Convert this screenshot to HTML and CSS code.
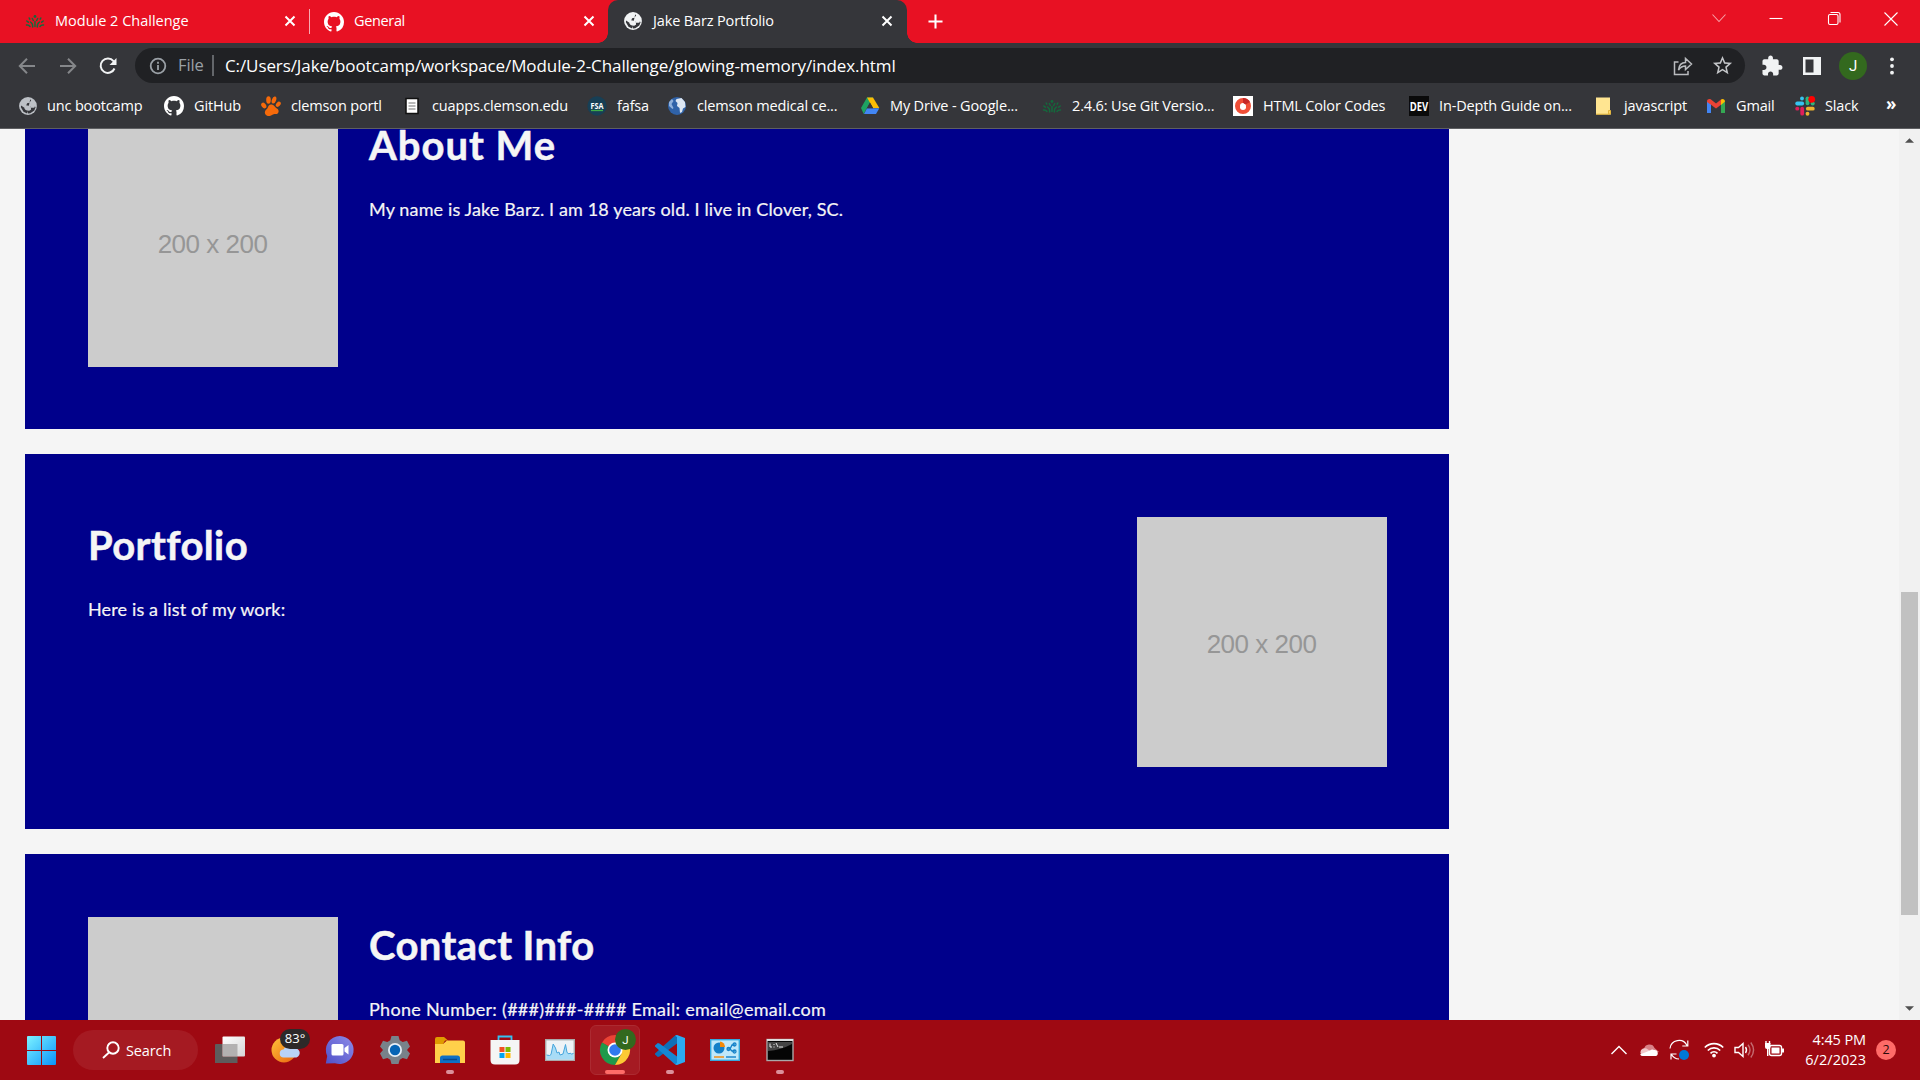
FILE: index.html
```html
<!DOCTYPE html>
<html lang="en">
<head>
<meta charset="utf-8">
<title>Jake Barz Portfolio</title>
<link rel="stylesheet" href="styles.css">
</head>
<body>
<svg class="defs" aria-hidden="true">
  <symbol id="globe" viewBox="0 0 20 20"><circle cx="10" cy="10" r="9.900" fill="currentColor"/><path d="M12.500 2.500l1 1.500-2 2.500-2.500.5-1 2.500 4 .5 1.500 2h3.500l.5-1.500 1 .5-1.500 4-4.500 3-2.500.3-.5-3-2.500-1L6 12 2.300 9.500l-.2 2L5 16.500l4 1.700" fill="#35363a" /><path d="M8 9.800h4l1.300 2v2.500l-2.500 1.200-2-2.500H6z" fill="currentColor"/></symbol>
  <symbol id="github" viewBox="0 0 16 16"><path fill="#fff" d="M8 0C3.580 0 0 3.580 0 8c0 3.540 2.290 6.530 5.470 7.590.4.070.55-.17.55-.38 0-.19-.01-.82-.01-1.490-2.010.37-2.530-.49-2.690-.94-.09-.23-.48-.94-.82-1.130-.28-.15-.68-.52-.01-.53.63-.01 1.080.58 1.230.82.72 1.210 1.870.87 2.330.66.070-.52.28-.87.51-1.070-1.780-.2-3.640-.89-3.640-3.950 0-.87.31-1.590.82-2.150-.08-.2-.36-1.020.08-2.120 0 0 .67-.21 2.200.82.64-.18 1.320-.27 2-.27s1.360.09 2 .27c1.530-1.040 2.200-.82 2.200-.82.44 1.100.16 1.920.08 2.120.51.56.82 1.270.82 2.150 0 3.070-1.870 3.750-3.650 3.950.29.25.54.73.54 1.480 0 1.070-.01 1.930-.01 2.200 0 .21.15.46.55.38A8.010 8.010 0 0 0 16 8c0-4.420-3.580-8-8-8z"/></symbol>
  <symbol id="leaf" viewBox="0 0 20 20"><g fill="none" stroke="#14693c" stroke-width="1.500" stroke-linecap="round"><path d="M10 15.500V10.500M7.700 16c.2-2.500-.7-4-2.200-5M12.300 16c-.2-2.500.7-4 2.200-5M5 15.500c-.8-1.200-2-1.700-3.500-1.500M15 15.500c.8-1.200 2-1.700 3.500-1.500M8.300 9.500L7.300 7.500M11.700 9.500l1-2M3.300 11.200L1.800 10M16.700 11.200l1.500-1.200M4.800 8.200l-.6-1.200M15.200 8.200l.6-1.200"/></g><circle cx="10" cy="5.500" r="1.400" fill="#14693c"/></symbol>
  <symbol id="close" viewBox="0 0 12 12"><path d="M1.500 1.500l9 9M10.500 1.500l-9 9" stroke="#fff" stroke-width="2" fill="none"/></symbol>
</svg>

<header class="browser">
  <div class="tabs">
    <div class="tab tab-first"><svg class="ico"><use href="#leaf"/></svg><span>Module 2 Challenge</span><svg class="x"><use href="#close"/></svg></div>
    <div class="tab tab-second"><svg class="ico"><use href="#github"/></svg><span>General</span><svg class="x"><use href="#close"/></svg></div>
    <div class="tab tab-active"><svg class="ico globe-tab"><use href="#globe"/></svg><span>Jake Barz Portfolio</span><svg class="x"><use href="#close"/></svg></div>
    <svg class="plus" viewBox="0 0 16 16"><path d="M8 .5v15M.5 8h15" stroke="#fff" stroke-width="2.200"/></svg>
    <div class="win">
      <svg viewBox="0 0 20 20"><path d="M3.500 6.500L10 13.500l6.500-7"/></svg>
      <svg viewBox="0 0 20 20"><path d="M3.500 10.500h13"/></svg>
      <svg viewBox="0 0 20 20"><rect x="4.500" y="6.500" width="9.500" height="10" rx="1.500"/><path d="M6.500 4.500h7.500q2 0 2 2v8"/></svg>
      <svg viewBox="0 0 20 20"><path d="M3.500 4.500l13 13M16.500 4.500l-13 13"/></svg>
    </div>
  </div>

  <div class="toolbar">
    <div class="nav">
      <svg viewBox="0 0 20 20"><path d="M18 10H3M10 2.800L2.800 10l7.200 7.200" stroke="#85878a"/></svg>
      <svg viewBox="0 0 20 20"><path d="M2 10h15M10 2.800l7.200 7.200-7.200 7.200" stroke="#85878a"/></svg>
      <svg viewBox="0 0 20 20"><path d="M16.500 12.500A7.200 7.200 0 1 1 15.500 5.200L17.500 7.500" stroke="#f1f3f4"/><path d="M18.500 2v7h-7z" fill="#f1f3f4"/></svg>
    </div>
    <div class="omnibox">
      <svg class="info" viewBox="0 0 18 18"><circle cx="9" cy="9" r="7.300"/><path d="M9 8v5M9 4.800v2"/></svg>
      <span class="scheme">File</span>
      <span class="url">C:/Users/Jake/bootcamp/workspace/Module-2-Challenge/glowing-memory/index.html</span>
      <svg class="share" viewBox="0 0 20 20"><path d="M5.500 6H1.500v12.500h13.500V15M5.500 14c.5-5 3-7.500 7-7.500V2.500L18.500 8l-6 5.500V10c-3 0-5 1-7 4z"/></svg>
      <svg class="star" viewBox="0 0 24 24"><path d="M22 9.240l-7.190-.62L12 2 9.190 8.630 2 9.240l5.460 4.730L5.820 21 12 17.270 18.180 21l-1.630-7.030L22 9.240zM12 15.400l-3.760 2.270 1-4.280-3.320-2.880 4.380-.38L12 6.100l1.710 4.040 4.380.38-3.320 2.880 1 4.280L12 15.400z"/></svg>
    </div>
    <div class="actions">
      <svg viewBox="1.500 1.500 21 21"><path fill="#f1f3f4" d="M20.500 11H19V7c0-1.100-.9-2-2-2h-4V3.500C13 2.120 11.880 1 10.500 1S8 2.120 8 3.500V5H4c-1.100 0-1.990.9-1.990 2v3.800H3.500c1.490 0 2.700 1.210 2.700 2.700s-1.210 2.700-2.700 2.700H2V20c0 1.100.9 2 2 2h3.800v-1.500c0-1.490 1.210-2.700 2.700-2.700s2.700 1.210 2.700 2.700V22H17c1.100 0 2-.9 2-2v-4h1.500c1.380 0 2.500-1.120 2.500-2.500S21.880 11 20.500 11z"/></svg>
      <svg viewBox="0 0 20 20"><path fill="#f1f3f4" fill-rule="evenodd" d="M1 1h18v18H1zM3.500 3.500v13h8v-13z"/></svg>
      <span class="avatar">J</span>
      <svg viewBox="0 0 20 20" fill="#f1f3f4"><circle cx="6" cy="3.300" r="1.900"/><circle cx="6" cy="10" r="1.900"/><circle cx="6" cy="16.700" r="1.900"/></svg>
    </div>
  </div>

  <nav class="bookmarks">
    <a><svg class="ico globe-mark"><use href="#globe"/></svg>unc bootcamp</a>
    <a><svg class="ico"><use href="#github"/></svg>GitHub</a>
    <a><svg class="ico" viewBox="0 0 20 20" fill="#f66a0a"><ellipse cx="2.800" cy="9.500" rx="2.200" ry="3.200" transform="rotate(-35 2.800 9.500)"/><ellipse cx="7.500" cy="4" rx="2.300" ry="3.700"/><ellipse cx="13" cy="4" rx="2.100" ry="3.700" transform="rotate(20 13 4)"/><ellipse cx="17.300" cy="8.300" rx="2" ry="3" transform="rotate(40 17.300 8.300)"/><path d="M10 8.500c3 0 3.500 2.500 6 4 3 2 1.500 6-1.500 5.500-2-.4-2.500.5-4.500 1.500-3 1.500-7-.5-6-4 .6-2 2-2 2.800-4C7.300 10 8 8.500 10 8.500z"/></svg>clemson portl</a>
    <a><svg class="ico" viewBox="0 0 20 20"><rect x="4" y="2.500" width="12" height="15" fill="#fff" stroke="#111" stroke-width="1.500"/><path d="M6.500 7h7M6.500 10h7M6.500 13h7" stroke="#777" stroke-width="1.200"/></svg>cuapps.clemson.edu</a>
    <a><svg class="ico" viewBox="0 0 20 20"><circle cx="10" cy="10" r="9.700" fill="#173f55"/><text x="10" y="12.500" class="fsa" text-anchor="middle" textLength="13" lengthAdjust="spacingAndGlyphs">FSA</text><path d="M4 14.500h12" stroke="#3fae49" stroke-width="1.300"/></svg>fafsa</a>
    <a><svg class="ico" viewBox="0 0 20 20"><circle cx="10" cy="10" r="9" fill="#2f62a8"/><path d="M9.500 3l5-1 3.500 4 .5 5-2.500 1.500L15 16l-2 1-.5-5-2.500-2 .5-3L8.500 5z" fill="#dce6f2"/><path d="M2 6l3-3 1.500 2-2 3 2 4-1 1L2 10z" fill="#8fb0db"/></svg>clemson medical ce...</a>
    <a><svg class="ico" viewBox="0 0 20 20"><path d="M7 1.500h6L7 12l-3.300 6L1 12z" fill="#1ea362"/><path d="M7 1.500h6L19.300 12H13z" fill="#fbbc05"/><path d="M4 18l3-5.800h12.300L16 18z" fill="#4286f5"/><path d="M10 6.500L13.200 12.200H6.800z" fill="#35363a"/></svg>My Drive - Google...</a>
    <a><svg class="ico"><use href="#leaf"/></svg>2.4.6: Use Git Versio...</a>
    <a><svg class="ico" viewBox="0 0 20 20"><path fill="#fff" d="M0 0h20v20H0z"/><circle cx="10" cy="10" r="5.500" fill="none" stroke="#f04e37" stroke-width="5"/><path d="M10 2a8 8 0 0 1 7 4l-4.500 2.500L10 7z" fill="#c62828"/><path d="M10 7l3 4a3 3 0 1 1-6 0z" fill="#fff"/></svg>HTML Color Codes</a>
    <a><svg class="ico" viewBox="0 0 20 20"><path d="M0 0h20v20H0z" fill="#0a0a0a"/><text x="10" y="14.500" class="dev" text-anchor="middle" textLength="18.500" lengthAdjust="spacingAndGlyphs">DEV</text></svg>In-Depth Guide on...</a>
    <a><svg class="ico" viewBox="0 0 20 20"><path d="M2 1.500h14V15h1v3.500H2z" fill="#ffe591"/><path d="M2 18.200h13.500M14.500 18v-3.500h2V18z" stroke="#e3b53c" fill="#ffd868"/></svg>javascript</a>
    <a><svg class="ico" viewBox="0 0 20 20"><path d="M1 5v12h4V8z" fill="#4285f4"/><path d="M19 5v12h-4V8z" fill="#34a853"/><path d="M1 5.500C1 3 3.500 2.500 5 3.500l5 4 5-4v5.300L10 12.500 5 8.800 1 6z" fill="#ea4335"/><path d="M15 3.500c1.500-1.200 4-.5 4 2L15 9z" fill="#fbbc04"/></svg>Gmail</a>
    <a><svg class="ico" viewBox="0 0 20 20" stroke-width="3.800" stroke-linecap="round"><path d="M2.200 7.500h5" stroke="#36c5f0"/><path d="M7 2.300v.2" stroke="#36c5f0"/><path d="M12.500 2.300v5" stroke="#2eb67d"/><path d="M17.800 7.500h-.2" stroke="#2eb67d"/><path d="M12.800 12.700h5" stroke="#ecb22e"/><path d="M12.500 17.800v-.2" stroke="#ecb22e"/><path d="M7.200 12.700v5" stroke="#e01e5a"/><path d="M2.200 12.700h.2" stroke="#e01e5a"/><circle cx="16.700" cy="3.300" r="3.400" fill="#f00" stroke="none"/></svg>Slack</a>
    <b class="more">»</b>
  </nav>
</header>

<div class="viewport">
  <main class="page">
    <section class="card">
      <div class="photo">200 x 200</div>
      <div class="copy"><h2 class="about">About Me</h2><p>My name is Jake Barz. I am 18 years old. I live in Clover, SC.</p></div>
    </section>
    <section class="card">
      <div class="copy"><h2>Portfolio</h2><p>Here is a list of my work:</p></div>
      <div class="photo">200 x 200</div>
    </section>
    <section class="card">
      <div class="photo"></div>
      <div class="copy"><h2>Contact Info</h2><p class="contact">Phone Number: (###)###-#### Email: email@email.com</p></div>
    </section>
  </main>
  <div class="scrollbar">
    <svg viewBox="0 0 10 5"><path d="M0 5h10L5 0z"/></svg>
    <div class="thumb"></div>
    <svg viewBox="0 0 10 5"><path d="M0 0h10L5 5z"/></svg>
  </div>
</div>

<footer class="taskbar">
  <svg class="start" viewBox="0 0 29 29"><defs><linearGradient id="w" x1="0" y1="0" x2="29" y2="29" gradientUnits="userSpaceOnUse"><stop stop-color="#7df3ff"/><stop offset="1" stop-color="#0a93fb"/></linearGradient></defs><path fill="url(#w)" d="M0 1q0-1 1-1h13v14H0zM15 0h13q1 0 1 1v13H15zM0 15h14v14H1q-1 0-1-1zM15 15h14v13q0 1-1 1H15z"/></svg>
  <div class="search"><svg viewBox="0 0 18 18"><circle cx="11" cy="7" r="5.700"/><path d="M7 11.500L1 17"/></svg>Search</div>
  <div class="apps">
    <div class="app"><svg viewBox="0 0 30 30"><defs><linearGradient id="tv" x2="1" y2="1"><stop stop-color="#fff"/><stop offset="1" stop-color="#d5d5d5"/></linearGradient></defs><rect x="7.500" y="1.500" width="22.500" height="20" rx="1" fill="url(#tv)"/><path d="M1 9h6.500v12.500H22.500V28H0V10q0-1 1-1z" fill="#5e5c5c"/><path d="M7.500 9h15v12.500h-15z" fill="#b3b1b1"/></svg></div>
    <div class="app"><svg viewBox="0 0 30 30"><defs><linearGradient id="su" x1="0" y1="0" x2="1" y2="1"><stop stop-color="#ffc43a"/><stop offset="1" stop-color="#e9630f"/></linearGradient></defs><circle cx="14" cy="15" r="12.500" fill="url(#su)"/><path d="M14 22.500a4 4 0 0 1-.5-8 6 6 0 0 1 10-1 4.500 4.500 0 0 1 3 9z" fill="#b9d3f7"/></svg><span class="temp">83°</span></div>
    <div class="app"><svg viewBox="0 0 30 30"><defs><linearGradient id="ch" x1="1" y1="0" x2="0" y2="1"><stop stop-color="#8d8be8"/><stop offset="1" stop-color="#5050c8"/></linearGradient></defs><path d="M15 1a14 14 0 1 1-5 27.200L.8 28.500 2.200 21A14 14 0 0 1 15 1z" fill="url(#ch)"/><rect x="6.500" y="9" width="12" height="11.500" rx="1.500" fill="#fff"/><path d="M19.500 13l4-3v9.500l-4-3z" fill="#fff"/></svg></div>
    <div class="app"><svg viewBox="0 0 30 30"><path d="M11.500 1h7l1.200 4.200 3 1.700 4.300-1.200L30 11.500 27 15l3 3.500-3 5.800-4.300-1.200-3 1.700-1.200 4.200h-7l-1.200-4.200-3-1.700L3 24.300 0 18.500 3 15l-3-3.500L3 5.700l4.300 1.200 3-1.700z" fill="#78828a"/><circle cx="15" cy="15" r="7" fill="#e4eef5"/><circle cx="15" cy="15" r="5.200" fill="#0565b5"/></svg></div>
    <div class="app run"><svg viewBox="0 0 30 30"><path d="M0 4q0-2 2-2h7l4 3.500h-3L8 9H0z" fill="#e09b00"/><path d="M0 9h8l4-3.500h16q2 0 2 2V28H0z" fill="#ffd04a"/><path d="M5 28v-5q0-2.500 2.500-2.500h15q2.500 0 2.500 2.500v5z" fill="#0e70c5"/><path d="M8 24.500h14" stroke="#07488d" stroke-width="1.500"/></svg></div>
    <div class="app"><svg viewBox="0 0 30 30"><path d="M8.500 6V1.500h13V6" fill="none" stroke="#35c1f1" stroke-width="1.800"/><path d="M.5 5h29v20q0 4.500-4.500 4.500H5Q.5 29.500.5 25z" fill="#f5f5f5"/><path d="M9.500 12h5v5h-5z" fill="#f25022"/><path d="M15.500 12h5v5h-5z" fill="#7fba00"/><path d="M9.500 18h5v5h-5z" fill="#00a4ef"/><path d="M15.500 18h5v5h-5z" fill="#ffb900"/></svg></div>
    <div class="app"><svg viewBox="0 0 30 30"><rect x=".7" y="4.700" width="28.600" height="20.600" fill="#eef3f6" stroke="#a9a9a9" stroke-width="1.400"/><path d="M1.500 24.500v-4.500l3 .5 1.500-1L8.200 9l2.300 4 1.500 5 2-1 1 3 3-1 2.500-9.500 1.500 8 2 1.500 1-1 1.500 1 2-.5v6z" fill="#a8dcf6"/><path d="M1.500 20l3 .5 1.500-1L8.200 9l2.300 4 1.500 5 2-1 1 3 3-1 2.500-9.500 1.500 8 2 1.500 1-1 1.500 1 2-.5" fill="none" stroke="#45a5dc" stroke-width="1"/></svg></div>
    <div class="app current"><svg viewBox="0 0 30 30"><path d="M15 15L2 7.500A15 15 0 0 1 28 7.500z" fill="#ea4335"/><path d="M15 15L2 7.500A15 15 0 0 0 15 30l6.500-11.200z" fill="#1e9a4b"/><path d="M15 15V7.500h13A15 15 0 0 1 15 30l6.500-11.200z" fill="#fcc934"/><circle cx="15" cy="15" r="7.500" fill="#fff"/><circle cx="15" cy="15" r="5.800" fill="#3079f0"/></svg><span class="profile">J</span></div>
    <div class="app run"><svg viewBox="0 0 30 30"><path d="M22 0v8.500L4.500 21.500 2.800 22 0 19.500v-1L19.500 1z" fill="#0f6fb8"/><path d="M22 30v-8.500L4.500 8.500 2.800 8 0 10.500v1L19.500 29z" fill="#1687d2"/><path d="M20 .8L22 0l8 3v24l-8 3-2-.8L22 28V2z" fill="#2cabf2"/></svg></div>
    <div class="app"><svg viewBox="0 0 30 30"><rect x=".7" y="4.700" width="28.600" height="20.600" fill="#bfe8fa" stroke="#36a8dd" stroke-width="1.400"/><circle cx="9" cy="13" r="5.500" fill="#1480c8"/><path d="M10 12V6.500a5.500 5.500 0 0 1 5 5.500z" fill="#f58a07"/><path d="M17 14h3l2-4h3M20 14l2 2h3" stroke="#1480c8" fill="none" stroke-width="1.300"/><g fill="none" stroke="#1480c8" stroke-width="1.300"><circle cx="18.500" cy="14" r="1.500"/><circle cx="24.500" cy="9.500" r="1.500"/><circle cx="24.500" cy="16.500" r="1.500"/></g><path d="M4 22h10" stroke="#f58a07" stroke-width="1.400"/><path d="M16 22h10" stroke="#1480c8" stroke-width="1.400"/></svg></div>
    <div class="app run"><svg viewBox="0 0 30 30"><rect x="2" y="4.500" width="26" height="21" fill="#050505" stroke="#a9a9a9" stroke-width="1.400"/><path d="M2 5h26" stroke="#ddd" stroke-width="2"/><path d="M3 16q13-1 24-7v-2H3z" fill="#444"/><path d="M5 8.500v3.500h2M9 9v1M9 11.500v1M11 8l2 4M14 12h4" stroke="#e5e5e5" stroke-width="1" fill="none"/></svg></div>
  </div>
  <div class="tray">
    <svg class="chev" viewBox="0 0 20 20"><path d="M2.500 14L10 6.500l7.500 7.500"/></svg>
    <svg class="cloud" viewBox="0 0 20 20"><path d="M5 9a5.500 5.500 0 0 1 10.500-1L20 12 4 15z" fill="#d98287"/><path d="M4 16a4 4 0 0 1 0-7.500 5 5 0 0 1 5 1L18 15z" fill="#f0c8ca"/><path d="M4 16q-2 0-3-1.500l10-4q2-1.500 4-.5a3.200 3.200 0 0 1 2 6z" fill="#fff"/></svg>
    <svg class="sync" viewBox="0 0 20 20"><path d="M1 8.500A9 9 0 0 1 18 5.500M18.800.5v5.500h-5.500M10 19A9 9 0 0 1 2.500 14.500M2 19.500V14h5.500"/><circle cx="15" cy="15" r="5" fill="#0078d7" stroke="none"/></svg>
    <svg class="wifi" viewBox="0 0 20 20"><path d="M.8 7.500a13 13 0 0 1 18.400 0M3.800 10.500a8.800 8.800 0 0 1 12.400 0M6.500 13.300a5 5 0 0 1 7 0"/><circle cx="10" cy="15.600" r="1.900" fill="#fff" stroke="none"/></svg>
    <svg class="sound" viewBox="0 0 20 20"><path d="M1 7.500h3.500L9 3.500v13l-4.500-4H1z"/><path d="M11.500 7q2 3 0 6"/><path d="M14 4.800q4 5.200 0 10.400M16.800 2.500q5.500 7.500 0 15" opacity=".4"/></svg>
    <svg class="battery" viewBox="0 0 20 20"><rect x="5.500" y="5.500" width="12" height="10" rx="2"/><path d="M7.500 7.500h8v6h-8z" fill="#fff" stroke="none"/><path d="M19 8.500v4" stroke-width="2"/><path d="M1 3h5.500v4q0 2-2 2H3q-2 0-2-2z" fill="#fff" stroke="none"/><path d="M2 1v3M5.500 1v3M3.700 9v7"/></svg>
    <div class="clock"><span>4:45 PM</span><span class="date">6/2/2023</span></div>
    <span class="badge">2</span>
  </div>
</footer>
</body>
</html>
```
FILE: styles.css
```css
* { box-sizing: border-box; }
body { margin: 0; width: 1920px; height: 1080px; overflow: hidden; display: flex; flex-direction: column; background: #f5f5f5; font-family: "Open Sans", "Noto Sans", sans-serif; }
svg { display: block; flex: none; overflow: visible; }
.defs { position: absolute; width: 0; height: 0; }
.ico { width: 20px; height: 20px; }

/* Browser chrome */
.browser { height: 129px; flex: none; background: #35363a; border-bottom: 1px solid #5e5f62; color: #fff; font-size: 14.5px; letter-spacing: -.12px; }
.tabs { height: 43px; background: #e81123; display: flex; align-items: center; }
.tab { display: flex; align-items: center; height: 43px; gap: 10px; padding-bottom: 1px; }
.tab span { flex: 1; white-space: nowrap; padding-bottom: 2px; }
.tab .x { width: 12px; height: 12px; }
.tab-first { width: 310px; padding-left: 25px; padding-right: 14px; position: relative; letter-spacing: 0; }
.tab-first::after { content: ""; position: absolute; right: 0; top: 9px; width: 1px; height: 25px; background: #f8a9b0; }
.tab-second { width: 298px; padding-left: 14px; padding-right: 13px; letter-spacing: -.35px; }
.tab-second .ico { margin-top: 1px; }
.tab-active { position: relative; width: 299px; padding-left: 16px; padding-right: 14px; background: #35363a; border-radius: 10px 10px 0 0; letter-spacing: -.14px; }
.tab-active .ico { width: 18px; height: 18px; margin-right: 1px; }
.tab-active::before, .tab-active::after { content: ""; position: absolute; bottom: 0; width: 10px; height: 10px; }
.tab-active::before { left: -10px; background: radial-gradient(circle at 0 0, transparent 9.500px, #35363a 10px); }
.tab-active::after { right: -10px; background: radial-gradient(circle at 100% 0, transparent 9.500px, #35363a 10px); }
.globe-tab { color: #f1f3f4; }
.globe-mark { color: #bdc1c6; width: 18px; height: 18px; margin: 0 0 0 1px; }
.plus { width: 15px; height: 15px; margin-left: 21px; margin-bottom: 1px; }
.win { margin-left: auto; margin-right: 19px; margin-bottom: 7px; display: flex; gap: 37.500px; }
.win svg { width: 20px; height: 20px; fill: none; stroke: #fff; stroke-width: 1.100; }
.win svg:first-child { stroke: #f6a0a7; }

.toolbar { height: 45px; display: flex; align-items: center; }
.nav { display: flex; width: 135px; padding-left: 17px; gap: 20.500px; }
.nav svg { width: 20px; height: 20px; fill: none; stroke-width: 2; }
.omnibox { width: 1610px; height: 35px; border-radius: 18px; background: #202124; display: flex; align-items: center; font-size: 17px; }
.info { width: 18px; height: 18px; margin-left: 14px; fill: none; stroke: #9aa0a6; stroke-width: 1.800; }
.scheme { width: 37px; margin-left: 10px; padding-left: 1px; color: #9aa0a6; line-height: 20px; padding-bottom: 1px; border-right: 2px solid #63666a; font-size: 16.500px; letter-spacing: -.1px; }
.url { margin-left: 11px; letter-spacing: -.1px; padding-bottom: 1px; }
.share { width: 20px; height: 20px; margin-left: auto; margin-right: 18px; fill: none; stroke: #b9bbbe; stroke-width: 1.500; }
.star { width: 23px; height: 23px; margin-right: 11px; fill: #c3c5c8; }
.actions { display: flex; align-items: center; margin-left: 17px; gap: 19px; }
.actions svg { width: 20px; height: 20px; }
.actions svg:nth-child(2) { margin-left: 1px; margin-right: -2px; }
.avatar, .profile { display: grid; place-items: center; border-radius: 50%; background: #33691e; color: #fff; font-family: Roboto, sans-serif; }
.avatar { width: 28px; height: 28px; font-size: 15px; }

.bookmarks { height: 38px; margin-top: -2px; padding-left: 18px; display: grid; align-items: center; grid-template-columns: 146px 97px 141px 185px 80px 193px 182px 191px 176px 185px 112px 89px 91px 20px; }
.bookmarks a { display: flex; align-items: center; gap: 10px; white-space: nowrap; letter-spacing: -.15px; }
.bookmarks .ico { position: relative; top: 1px; }
.more { font-size: 17px; line-height: 20px; padding-bottom: 2px; }
.fsa, .dev { fill: #fff; font-family: "Open Sans", sans-serif; font-weight: 700; letter-spacing: 0; }
.fsa { font-size: 9px; }
.dev { font-size: 12.500px; }

/* Web page */
.viewport { height: 891px; flex: none; overflow: hidden; display: flex; justify-content: space-between; }
.page { margin-top: -75px; padding-left: 25px; font-family: Lato, sans-serif; color: #f5f5f5; }
.card { width: 1424px; height: 375px; margin-bottom: 25px; padding: 63px 62px 62px 63px; display: flex; gap: 31px; background: #00008b; }
.photo { width: 250px; height: 250px; flex: none; background: #ccc; color: #969696; display: grid; place-items: center; padding: 4px 1px 0 0; font: 26px "Liberation Sans", sans-serif; letter-spacing: -.5px; }
.copy { flex: 1; }
h2 { margin: 2.500px 0 0; font-size: 40px; line-height: 50px; letter-spacing: .4px; -webkit-text-stroke: .5px #f5f5f5; }
.about { letter-spacing: 1px; }
p { margin: 27.500px 0 0; font-size: 18px; line-height: 24px; letter-spacing: .14px; -webkit-text-stroke: .2px #f5f5f5; }
.contact { letter-spacing: .3px; }
.scrollbar { width: 21px; background: #f1f1f1; display: flex; flex-direction: column; align-items: center; padding: 9px 0; }
.scrollbar svg { width: 9px; height: 5px; fill: #505050; }
.thumb { width: 17px; height: 323px; margin-top: 449px; margin-bottom: auto; background: #c1c1c1; }

/* Taskbar */
.taskbar { height: 60px; flex: none; background: #9e0912; display: flex; align-items: center; color: #fff; font-size: 14.500px; }
.start { width: 29px; height: 29px; margin-left: 27px; }
.search { width: 125px; height: 40px; margin-left: 17px; padding-left: 29px; border-radius: 20px; background: #a51a22; display: flex; align-items: center; gap: 6px; letter-spacing: -.12px; }
.search svg { width: 18px; height: 18px; fill: none; stroke: #fff; stroke-width: 1.900; }
.apps { display: flex; gap: 5px; margin-left: 7px; }
.app { width: 50px; height: 50px; display: grid; place-items: center; position: relative; border-radius: 6px; }
.app > svg { width: 30px; height: 30px; }
.run::after, .current::after { content: ""; position: absolute; bottom: 1px; width: 8px; height: 4px; border-radius: 2px; background: #dc8f9a; }
.current { background: #a51a22; border: 1px solid #ac2a31; }
.current::after { width: 20px; bottom: 0; background: #ff6b68; }
.temp { position: absolute; left: 20px; top: 4px; width: 30px; height: 20px; border-radius: 10px; background: #2d2929; font-size: 13px; line-height: 19px; text-align: center; }
.profile { position: absolute; left: 24px; top: 3px; width: 21px; height: 21px; font-size: 11.500px; }
.tray { margin-left: auto; display: flex; align-items: center; margin-right: 24px; }
.tray svg { width: 20px; height: 20px; fill: none; stroke: #fff; stroke-width: 1.400; }
.tray .cloud { stroke: none; margin-left: 10px; }
.tray .sync { margin-left: 10px; stroke-width: 1.200; }
.tray .wifi { margin-left: 15px; stroke-width: 1.700; }
.tray .sound { margin-left: 10px; }
.tray .battery { margin-left: 10px; }
.clock { width: 82px; display: flex; flex-direction: column; align-items: flex-end; line-height: 20px; letter-spacing: -.1px; }
.date { letter-spacing: .05px; }
.badge { margin-left: 10px; width: 20px; height: 20px; border-radius: 50%; background: #ff6b68; color: #2a0a0a; font-size: 12.500px; line-height: 20px; text-align: center; }
```
